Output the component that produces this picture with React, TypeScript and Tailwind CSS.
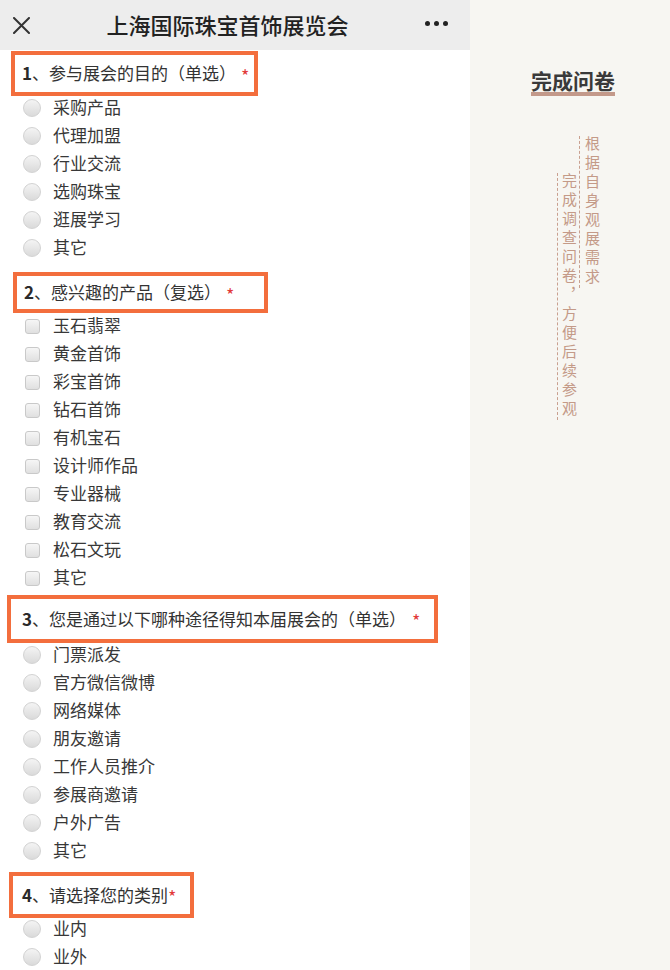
const questions = [
  {
    no: "1",
    title: "、参与展会的目的（单选）",
    kind: "radio",
    box: "ml-[11px] mt-px w-[247px] h-[45px]",
    list: "-mt-[2px]",
    starGap: "ml-[5px]",
    options: ["采购产品", "代理加盟", "行业交流", "选购珠宝", "逛展学习", "其它"],
  },
  {
    no: "2",
    title: "、感兴趣的产品（复选）",
    kind: "check",
    box: "ml-[13px] mt-[10px] w-[255px] h-[41px] pl-[5px]",
    list: "-mt-px",
    starGap: "ml-[5px]",
    options: [
      "玉石翡翠",
      "黄金首饰",
      "彩宝首饰",
      "钻石首饰",
      "有机宝石",
      "设计师作品",
      "专业器械",
      "教育交流",
      "松石文玩",
      "其它",
    ],
  },
  {
    no: "3",
    title: "、您是通过以下哪种途径得知本届展会的（单选）",
    kind: "radio",
    box: "ml-[7px] mt-[3px] w-[431px] h-[48px] pl-[11px]",
    list: "-mt-[2px]",
    starGap: "ml-[6px]",
    options: ["门票派发", "官方微信微博", "网络媒体", "朋友邀请", "工作人员推介", "参展商邀请", "户外广告", "其它"],
  },
  {
    no: "4",
    title: "、请选择您的类别",
    kind: "radio",
    box: "ml-[9px] mt-[7px] w-[185px] h-[46px] pl-[9px]",
    list: "-mt-[3px]",
    starGap: "ml-0",
    options: ["业内", "业外"],
  },
];

function Radio() {
  return (
    <span className="block h-[18px] w-[18px] rounded-full border border-[#d2d2d2] bg-linear-to-b from-[#f4f4f4] to-[#dadada]" />
  );
}

function Check() {
  return (
    <span className="block h-[15px] w-[15px] rounded-[3px] border border-[#c9c9c9] bg-linear-to-b from-[#f6f6f6] to-[#e0e0e0]" />
  );
}

export default function App() {
  return (
    <div className="flex h-[970px] w-[670px] overflow-hidden font-['Noto_Sans_CJK_SC','Noto_Sans',sans-serif] text-[#333]">
      {/* survey column */}
      <div className="w-[470px] shrink-0 bg-white">
        <header className="flex h-[50px] items-center justify-between bg-[#ededed] pl-[13px] pr-[22px]">
          <svg width="17" height="17" viewBox="0 0 17 17" className="text-[#333]">
            <path d="M1 1L16 16M16 1L1 16" stroke="currentColor" strokeWidth="2" strokeLinecap="round" />
          </svg>
          <h1 className="pb-[2px] text-[22px] leading-none font-medium text-[#222]">上海国际珠宝首饰展览会</h1>
          <div className="flex gap-[4px] pb-[3px]">
            <span className="h-[5px] w-[5px] rounded-full bg-[#222]" />
            <span className="h-[5px] w-[5px] rounded-full bg-[#222]" />
            <span className="h-[5px] w-[5px] rounded-full bg-[#222]" />
          </div>
        </header>

        {questions.map((q) => (
          <section key={q.no}>
            <div className={`flex items-center border-4 border-[#f36e3d] pl-[7px] ${q.box}`}>
              <span className="pb-[2px] text-[17px] leading-none">
                <b className="font-bold text-[#2a2a2a]">{q.no}</b>
                {q.title}
              </span>
              <span className={`translate-y-[1px] text-[18px] leading-none text-[#e23a3a] ${q.starGap}`}>*</span>
            </div>
            <ul className={q.list}>
              {q.options.map((opt) => (
                <li key={opt} className="flex h-[28px] items-center pl-[23px]">
                  <span className="flex w-[18px] justify-center">
                    {q.kind === "radio" ? <Radio /> : <Check />}
                  </span>
                  <span className="ml-[12px] pb-[4px] text-[17px] leading-none text-[#383838]">{opt}</span>
                </li>
              ))}
            </ul>
          </section>
        ))}
      </div>

      {/* side note */}
      <div className="flex-1 bg-[#f7f6f2]">
        <div className="pl-[61px] pt-[68px]">
          <span className="inline-block border-b-4 border-[#c3998a] text-[21px] leading-[24px] font-bold text-[#3a3a3a]">
            完成问卷
          </span>
        </div>
        <div className="ml-[87px] mt-[40px] flex items-start text-[15px] leading-[15px] tracking-[4px] text-[#c49a88]">
          <p className="mt-[37px] border-l border-dashed border-[#c9a090] pl-[4px] [writing-mode:vertical-rl]">
            完成调查问卷，方便后续参观
          </p>
          <p className="ml-[2px] border-l border-dashed border-[#c9a090] pl-[5px] [writing-mode:vertical-rl]">
            根据自身观展需求
          </p>
        </div>
      </div>
    </div>
  );
}
